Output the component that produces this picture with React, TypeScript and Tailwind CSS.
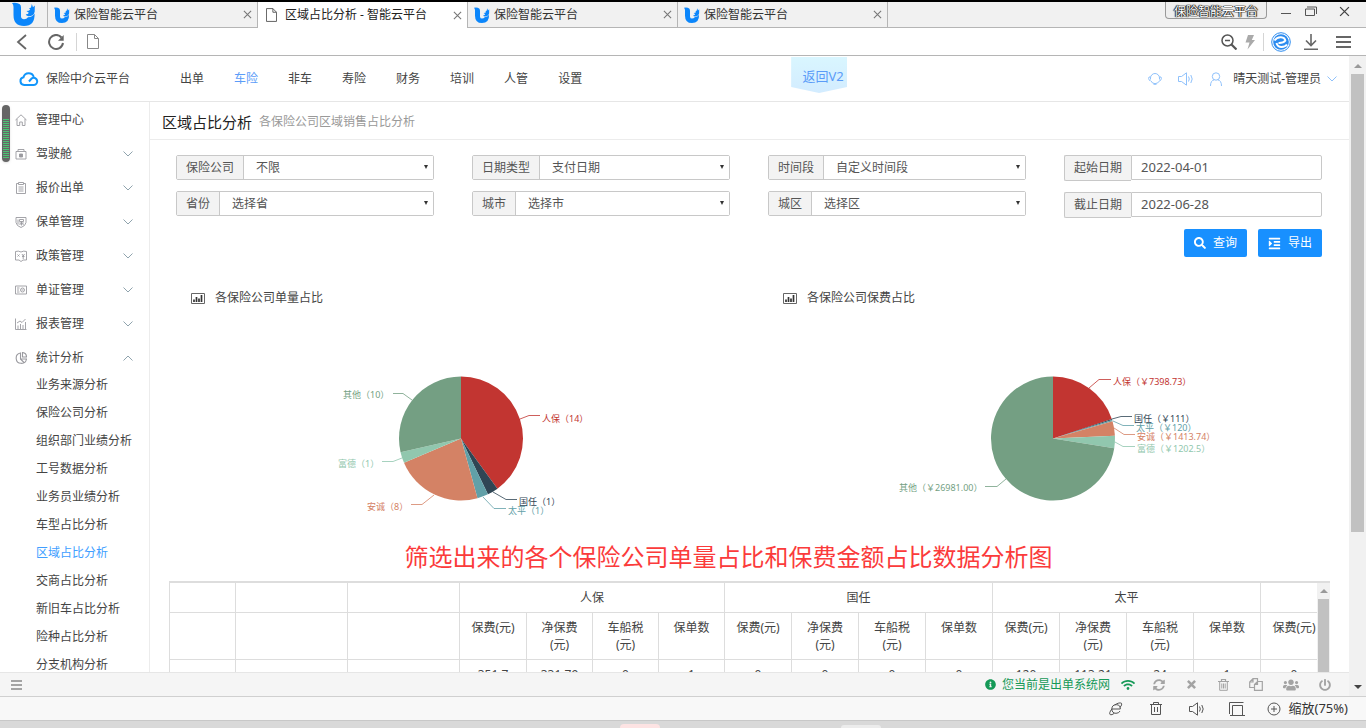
import React from "react";
import {
  FaIndent,
  FaInfoCircle,
  FaPowerOff,
  FaSearch,
  FaSyncAlt,
  FaUsers,
  FaWifi,
} from "react-icons/fa";

type IconProps = { className?: string };

// ---------- data ----------

const browserTabs = [
  { title: "保险智能云平台", active: false },
  { title: "区域占比分析 - 智能云平台", active: true },
  { title: "保险智能云平台", active: false },
  { title: "保险智能云平台", active: false },
];

const navItems = ["出单", "车险", "非车", "寿险", "财务", "培训", "人管", "设置"];

const subMenu = [
  "业务来源分析",
  "保险公司分析",
  "组织部门业绩分析",
  "工号数据分析",
  "业务员业绩分析",
  "车型占比分析",
  "区域占比分析",
  "交商占比分析",
  "新旧车占比分析",
  "险种占比分析",
  "分支机构分析",
];

const PALETTE = ["#c23531", "#2f4554", "#61a0a8", "#d48265", "#91c7ae", "#749f83"];

type Slice = { label: string; value: number; line: string; x: number; y: number };

const countSlices: Slice[] = [
  { label: "人保（14）", value: 14, line: "347,99 356,95.5 367,95.5", x: 369, y: 98 },
  { label: "国任（1）", value: 1, line: "320,172 333,179.5 344,179.5", x: 346, y: 181 },
  { label: "太平（1）", value: 1, line: "310,177 321,188.5 333,188.5", x: 335, y: 190 },
  { label: "安诚（8）", value: 8, line: "261,175 249,184.5 238,184.5", x: 194, y: 186 },
  { label: "富德（1）", value: 1, line: "229,138 220,141.5 209,141.5", x: 165, y: 143 },
  { label: "其他（10）", value: 10, line: "239,80 230,73.5 220,73.5", x: 170, y: 74 },
];

const premiumSlices: Slice[] = [
  { label: "人保（￥7398.73）", value: 7398.73, line: "324,68 334,59.5 346,59.5", x: 348, y: 61 },
  { label: "国任（￥111）", value: 111, line: "347,99 356,96.5 367,96.5", x: 369, y: 98 },
  { label: "太平（￥120）", value: 120, line: "348,101 358,105.5 369,105.5", x: 371, y: 107 },
  { label: "安诚（￥1413.74）", value: 1413.74, line: "349,108 359,114.5 370,114.5", x: 372, y: 116 },
  { label: "富德（￥1202.5）", value: 1202.5, line: "350,122 358,126.5 370,126.5", x: 372, y: 128 },
  { label: "其他（￥26981.00）", value: 26981, line: "241,159 232,166.5 220,166.5", x: 134, y: 167 },
];

const groups = [
  { name: "人保", row: ["351.7", "331.79", "0", "1"] },
  { name: "国任", row: ["0", "0", "0", "0"] },
  { name: "太平", row: ["120", "113.21", "24", "1"] },
];
const columns = ["保费(元)", "净保费(元)", "车船税(元)", "保单数"];

// ---------- icons ----------

function LogoU({ className }: IconProps) {
  return (
    <svg viewBox="0 0 24 24" className={className} fill="#0b86fb" aria-hidden="true">
      <path d="M0 1Q5 0 7.800 2.200 9 3.200 9 5.500V14.500Q9.300 17.300 12 17.300 14.600 17.200 16 15.200 20.500 15.200 22.600 11.500 23 24 12 24 1.500 24 1.500 13V5Q1.500 2.500 0 1z" />
      <path d="M14.500 9Q17 9 18.300 7.500L17 6.500 19 5.600 19.800 2 21 5.300 22.800 3.500 22.700 9.500Q22 14.200 16.500 14.300 14 14 13.800 12.300 16 12.600 16.800 10.800z" />
    </svg>
  );
}

function FileIcon({ className }: IconProps) {
  return (
    <svg viewBox="0 0 12 15" className={className} fill="none" stroke="currentColor" aria-hidden="true">
      <path d="M.5.5h7l4 4v10H.5zM7.500.5v4h4" />
    </svg>
  );
}

function CloseIcon({ className }: IconProps) {
  return (
    <svg viewBox="0 0 10 10" className={className} fill="none" stroke="currentColor" strokeWidth="1.2" aria-hidden="true">
      <path d="M1 1l8 8M9 1L1 9" />
    </svg>
  );
}

function Chevron({ className, up }: IconProps & { up?: boolean }) {
  return (
    <svg viewBox="0 0 10 6" className={className} fill="none" stroke="currentColor" aria-hidden="true">
      <path d={up ? "M.5 5.500L5 1l4.500 4.500" : "M.5.5L5 5 9.500.5"} />
    </svg>
  );
}

function CloudLogo({ className }: IconProps) {
  return (
    <svg viewBox="0 0 20 16" className={className} fill="none" stroke="#1296fb" strokeWidth="2" aria-hidden="true">
      <path d="M10 10.500l2.800-3.200a3.600 3.600 0 1 1 2 6.700H5.200a3.900 3.900 0 0 1-.7-7.700A5.400 5.400 0 0 1 14.800 6" />
    </svg>
  );
}

function BarsIcon({ className }: IconProps) {
  return (
    <svg viewBox="0 0 14 11" className={className} fill="none" aria-hidden="true">
      <path d="M.5.5h13v10H.5z" stroke="#666" />
      <path d="M3 9V6.500M5.500 9V4M8 9V5.500M10.500 9V2" stroke="#333" strokeWidth="1.700" />
    </svg>
  );
}

function SoundIcon({ className }: IconProps) {
  return (
    <svg viewBox="0 0 16 14" className={className} fill="none" stroke="currentColor" aria-hidden="true">
      <path d="M.5 4.500h3L8.500.8v12.400L3.500 9.500h-3zM10.500 4.500q1.600 2.500 0 5M12.800 3q2.800 4 0 8" />
    </svg>
  );
}

function MenuIcon({ className }: IconProps) {
  return (
    <svg viewBox="0 0 11 10" className={className} stroke="currentColor" strokeWidth="2" aria-hidden="true">
      <path d="M0 1h11M0 5h11M0 9h11" />
    </svg>
  );
}

function TimesIcon({ className }: IconProps) {
  return (
    <svg viewBox="0 0 10 10" className={className} stroke="currentColor" strokeWidth="2.800" aria-hidden="true">
      <path d="M1 1l8 8M9 1L1 9" />
    </svg>
  );
}

function TrashIcon({ className }: IconProps) {
  return (
    <svg viewBox="0 0 11 12" className={className} fill="none" stroke="currentColor" aria-hidden="true">
      <path d="M0 2.500h11M3.500 2.500v-2h4v2" strokeWidth="1.200" />
      <path d="M1.700 2.500v8.800h7.600V2.500M3.800 4.500v5M5.500 4.500v5M7.200 4.500v5" />
    </svg>
  );
}

function CopyIcon({ className }: IconProps) {
  return (
    <svg viewBox="0 0 14 13" className={className} fill="none" stroke="currentColor" strokeWidth="1.200" aria-hidden="true">
      <path d="M5 9.500H.7V4L4 .7h4.500v3M4 .7V4H.7M5.500 6.500L8.500 3.500h4.800v8.800H5.500zM8.500 3.500v3h-3" />
    </svg>
  );
}

const sideIcon = (children: React.ReactNode) => (
  <svg viewBox="0 0 12 12" className="h-3 w-3 text-[#9a9a9f]" fill="none" stroke="currentColor" strokeWidth="0.9" aria-hidden="true">
    {children}
  </svg>
);

const menu = [
  { label: "管理中心", icon: sideIcon(<path d="M.5 6L6 .8 11.500 6M2 5v6.500h2.700V8h2.600v3.500H10V5" />) },
  {
    label: "驾驶舱",
    icon: sideIcon(
      <>
        <path d="M1 3.500h10v7.500H1zM3 3V1.500h6V3" />
        <path d="M4.500 6h3v3h-3z" fill="currentColor" />
      </>
    ),
  },
  { label: "报价出单", icon: sideIcon(<path d="M3.500 1.500h-2v10h9v-10h-2M3.500.5h5v2h-5zM3.500 5h5M3.500 7h5M3.500 9h5" />) },
  { label: "保单管理", icon: sideIcon(<path d="M1 1.500h10v5Q10.500 10 6 11.500 1.500 10 1 6.500zM3 3.500v5M4.500 3.500h4v2h-4zM4.300 7h4.500M6.500 5.500v4M6.500 7L4.500 9M6.500 7l2.300 2" />) },
  { label: "政策管理", icon: sideIcon(<path d="M.5 1.500Q3.500.5 6 2q2.500-1.500 5.500-.5v8.500H8L6 11.500 4 10H.5zM2.500 4.500l2 2M2.500 6.500l2-2M7 4l1.200 2L9.500 4M7 6.500h2.500M8.200 6v3" />) },
  { label: "单证管理", icon: sideIcon(<path d="M.5 2h11v8H.5zM2 4h2.500M2 6h2M2 8h2.500M9.500 6a2 2 0 1 1-4 0 2 2 0 0 1 4 0zM6.500 6h2" />) },
  { label: "报表管理", icon: sideIcon(<path d="M.5.5v11h11M3 11V7.500M5.500 11V6M8 11V7M10.500 11V4M2 5l3-2 2 1.500L10.500 1" />) },
  { label: "统计分析", icon: sideIcon(<path d="M5.500 1a5.200 5.200 0 1 0 6 6h-6zM7.500.5V5h4Q11.500 1 7.500.5zM5.500 7l3.500 3.500" strokeWidth="1.1" />) },
];

// ---------- browser chrome ----------

function TabStrip() {
  return (
    <div className="flex h-[26px] bg-[#f1f1f1]">
      <div className="flex w-12 justify-center border-r border-b border-[#b5b5b5]">
        <LogoU className="h-6 w-6" />
      </div>
      {browserTabs.map((tab, i) => (
        <div
          key={i}
          className={
            "flex w-[210px] items-center gap-1 border-r border-[#b5b5b5] pr-[5px] pl-1.5 " +
            (tab.active ? "bg-white text-[#222]" : "border-b text-[#333]")
          }
        >
          {tab.active ? (
            <FileIcon className="mr-1 ml-0.5 h-3.5 w-[11px] text-[#555]" />
          ) : (
            <LogoU className="h-4 w-4" />
          )}
          <span className="flex-1 truncate">{tab.title}</span>
          <button type="button" aria-label="关闭标签页" className="text-[#777]">
            <CloseIcon className="h-[9px] w-[9px]" />
          </button>
        </div>
      ))}
      <div className="flex flex-1 items-start justify-end border-b border-[#b5b5b5] pr-4">
        <span className="h-[17px] rounded-b border border-t-0 border-[#999] bg-[#eee] px-2 leading-[19px] text-white [text-shadow:0_0_1px_#000,0_0_1px_#000,1px_0_1px_#222,-1px_0_1px_#222]">
          保险智能云平台
        </span>
        <button type="button" aria-label="最小化" className="mt-[11px] ml-3.5 h-px w-2.5 bg-[#555]" />
        <button type="button" aria-label="还原" className="mt-1 ml-3.5 text-[#555]">
          <svg viewBox="0 0 12 10" className="h-2.5 w-3" fill="none" stroke="currentColor">
            <path d="M.5 3h9v6.500h-9zM2 1h9.500v7" />
          </svg>
        </button>
        <button type="button" aria-label="关闭" className="mt-1 ml-[22px] text-[#444]">
          <CloseIcon className="h-[11px] w-[11px]" />
        </button>
      </div>
    </div>
  );
}

function Toolbar() {
  return (
    <div className="flex h-7 items-center border-b border-[#b5b5b5] bg-white pr-[15px] pl-4 text-[#666]">
      <button type="button" aria-label="后退">
        <svg viewBox="0 0 12 16" className="h-4 w-3" fill="none" stroke="currentColor" strokeWidth="1.800">
          <path d="M10 1L2 8l8 7" />
        </svg>
      </button>
      <button type="button" aria-label="刷新" className="ml-5">
        <svg viewBox="0 0 16 16" className="h-4 w-4" fill="none" stroke="currentColor" strokeWidth="2">
          <path d="M13.500 3.500A7 7 0 1 0 15 9" />
          <path d="M15.700 1v5.700H10z" fill="currentColor" stroke="none" />
        </svg>
      </button>
      <span className="ml-3 h-[18px] w-px bg-[#d5d5d5]" />
      <FileIcon className="ml-2.5 h-[15px] w-3 text-[#888]" />
      <button type="button" aria-label="缩小" className="ml-auto">
        <svg viewBox="0 0 16 16" className="h-4 w-4" fill="none" stroke="#555" strokeWidth="1.500">
          <circle cx="6.500" cy="6.500" r="5.500" />
          <path d="M4 6.500h5" />
          <path d="M10.500 10.500l5 5" strokeWidth="2.200" />
        </svg>
      </button>
      <svg viewBox="0 0 10 16" className="ml-2 h-4 w-2.5" fill="#aaa" aria-hidden="true">
        <path d="M3 1h6L6.800 6H10L2.500 15.500 4.500 8.500H.5z" />
      </svg>
      <span className="ml-2 h-[18px] w-px bg-[#d5d5d5]" />
      <svg viewBox="0 0 20 20" className="ml-[7px] h-5 w-5" fill="none" aria-hidden="true">
        <circle cx="10" cy="10" r="9.300" stroke="#2d8cf0" />
        <circle cx="10" cy="10" r="7.800" fill="#2d8cf0" />
        <path d="M3.500 8.500Q6 4.800 10 5.200q4 .4 4.300 3.500-2 2.500-6.800 2.300M5.500 11q1 4 5 4 4-.2 5.500-2.500" stroke="#fff" strokeWidth="2" />
      </svg>
      <button type="button" aria-label="下载" className="ml-3">
        <svg viewBox="0 0 16 16" className="h-4 w-4" fill="none" stroke="currentColor" strokeWidth="1.600">
          <path d="M8 0v11.500M3 6.500l5 5 5-5M1 15.200h14" />
        </svg>
      </button>
      <button type="button" aria-label="菜单" className="ml-[17px]">
        <svg viewBox="0 0 15 12" className="h-3 w-[15px]" stroke="currentColor" strokeWidth="2">
          <path d="M0 1h15M0 6h15M0 11h15" />
        </svg>
      </button>
    </div>
  );
}

function StatusBar() {
  return (
    <div className="flex h-6 items-center justify-end border-t border-[#d0d0d0] bg-[#f8f8f8] pr-[18px] text-[#555]">
      <svg viewBox="0 0 14 13" className="h-3.5 w-3.5" fill="none" stroke="currentColor" aria-hidden="true">
        <path d="M2.800 6.500h8.500Q11.500 2.200 7.300 2.200 3 2.200 2.800 6.500q.2 4.300 4.200 4.300 3 0 4-2.300M5.500 2.500Q10.500-.5 12.500.8 13.500 2 11 5M2.800 6.500Q-.5 11 1.300 12.200q1.500.6 4-1.400" />
      </svg>
      <svg viewBox="0 0 12 13" className="ml-[27px] h-[13px] w-3" fill="none" stroke="currentColor" aria-hidden="true">
        <path d="M0 2.500h12M3.500 2.500v-2h5v2M1.500 2.500v10h9v-10M4.500 5v5M7.500 5v5" />
      </svg>
      <SoundIcon className="ml-[27px] h-3.5 w-4" />
      <svg viewBox="0 0 16 14" className="ml-6 h-3.5 w-4" fill="none" stroke="currentColor" aria-hidden="true">
        <path d="M.5 12V.5h14M3.500 3.500h10v10h-10zM1 13.500h15" />
      </svg>
      <svg viewBox="0 0 14 14" className="ml-[22px] h-3.5 w-3.5" fill="none" stroke="currentColor" aria-hidden="true">
        <circle cx="7" cy="7" r="6" />
        <path d="M4 7h6M7 4v6" />
      </svg>
      <span className="ml-2 text-[13px] text-[#333]">缩放(75%)</span>
    </div>
  );
}

function Taskbar() {
  return (
    <div className="flex h-2 items-end border-t border-[#c8c8c8] bg-[#d9d9d9] pl-[620px]">
      <span className="h-1 w-10 rounded-t bg-[#fde3e3]" />
      <span className="ml-[181px] h-[3px] w-10 rounded-t bg-[#ececec]" />
    </div>
  );
}

// ---------- page ----------

function PageHeader() {
  return (
    <header className="flex h-[46px] shrink-0 items-center border-b border-[#e6e6e6] pt-px pr-3 pl-[19px]">
      <CloudLogo className="h-4 w-5" />
      <span className="ml-[7px]">保险中介云平台</span>
      <nav className="ml-[50px] flex gap-[30px]">
        {navItems.map((item) => (
          <a key={item} href="#" className={item === "车险" ? "text-[#5b9cf8]" : ""}>
            {item}
          </a>
        ))}
      </nav>
      <a
        href="#"
        className="ml-[209px] flex h-9 w-14 justify-center self-start bg-linear-to-b from-[#d9f6ff] to-[#d3ecff] pt-2.5 pl-2 text-[13px] leading-[18px] text-[#5b9cf8] [clip-path:polygon(0_0,100%_0,100%_83%,50%_100%,0_83%)]"
      >
        返回V2
      </a>
      <div className="ml-auto flex items-center text-[#8fc1fb]">
        <svg viewBox="0 0 14 14" className="h-3.5 w-3.5" fill="none" stroke="currentColor" aria-hidden="true">
          <path d="M2.500 7.500V6a4.500 4.500 0 0 1 9 0v1.500M2.500 5H1Q0 6.500 1.500 8.500h1M11.500 5H13q1 1.500-.5 3.500h-1M3 9q1 2.500 4 2.700Q10 11.500 11.500 9M5.500 12.300h3" />
        </svg>
        <SoundIcon className="ml-4 h-3.5 w-4" />
        <svg viewBox="0 0 12 14" className="ml-4 h-3.5 w-3" fill="none" stroke="currentColor" aria-hidden="true">
          <circle cx="6" cy="4.500" r="3.700" />
          <path d="M.5 14Q.5 8.500 4.300 7.800M11.500 14Q11.500 8.500 7.700 7.800" />
        </svg>
        <span className="ml-[11px] text-[#444]">晴天测试-管理员</span>
        <Chevron className="ml-1.5 h-1.5 w-2.5" />
      </div>
    </header>
  );
}

function Sidebar() {
  return (
    <aside className="relative w-[150px] shrink-0 overflow-hidden border-r border-[#ececec]">
      {/* floating memory gauge at the window edge */}
      <div className="absolute top-[3px] left-0.5 flex h-[57px] w-2 flex-col rounded-full bg-[#666] px-px pt-3.5 pb-1 shadow">
        <span className="flex-1 bg-[repeating-linear-gradient(#4cc474_0_1px,#666_1px_2px)]" />
      </div>
      <ul className="pt-px">
        {menu.map((item) => (
          <li key={item.label}>
            <a href="#" className="flex h-[34px] items-center pr-4 pl-[15px]">
              {item.icon}
              <span className="ml-[9px] flex-1">{item.label}</span>
              {item.label !== "管理中心" && (
                <Chevron up={item.label === "统计分析"} className="h-1.5 w-2.5 text-[#8fa3ad]" />
              )}
            </a>
          </li>
        ))}
      </ul>
      <ul className="-mt-1 pl-9">
        {subMenu.map((item) => (
          <li key={item}>
            <a href="#" className={"flex h-7 items-center " + (item === "区域占比分析" ? "text-[#409eff]" : "")}>
              {item}
            </a>
          </li>
        ))}
      </ul>
    </aside>
  );
}

function SelectField({ id, label, value }: { id: string; label: string; value: string }) {
  return (
    <div className="relative flex h-[25px] rounded-xs border border-[#c8c8c8] text-[#555]">
      <label htmlFor={id} className="flex items-center border-r border-[#c8c8c8] bg-[#f3f3f3] px-[9px]">
        {label}
      </label>
      <select id={id} className="min-w-0 flex-1 appearance-none bg-white pt-px pl-3" defaultValue={value}>
        <option>{value}</option>
      </select>
      <svg viewBox="0 0 4 4" className="pointer-events-none absolute top-[9px] right-[5px] h-1 w-1" fill="#333" aria-hidden="true">
        <path d="M0 0h4L2 4z" />
      </svg>
    </div>
  );
}

function DateField({ id, label, value }: { id: string; label: string; value: string }) {
  return (
    <div className="flex items-start text-[#555]">
      <label
        htmlFor={id}
        className="flex h-[26px] items-center rounded-l-xs border border-r-0 border-[#c8c8c8] bg-[#f3f3f3] px-[9px]"
      >
        {label}
      </label>
      <input
        id={id}
        type="text"
        defaultValue={value}
        className="h-[25px] min-w-0 flex-1 rounded-r-xs border border-[#c8c8c8] pb-0.5 pl-[9px] text-[13px]"
      />
    </div>
  );
}

function Filters() {
  return (
    <form className="pt-[15px] pr-[27px] pl-[26px]" onSubmit={(e) => e.preventDefault()}>
      <div className="grid grid-cols-4 gap-x-[38px]">
        <div className="flex flex-col gap-[11px]">
          <SelectField id="company" label="保险公司" value="不限" />
          <SelectField id="province" label="省份" value="选择省" />
        </div>
        <div className="flex flex-col gap-[11px]">
          <SelectField id="dateType" label="日期类型" value="支付日期" />
          <SelectField id="city" label="城市" value="选择市" />
        </div>
        <div className="flex flex-col gap-[11px]">
          <SelectField id="period" label="时间段" value="自定义时间段" />
          <SelectField id="district" label="城区" value="选择区" />
        </div>
        <div className="flex flex-col gap-[11px]">
          <DateField id="start" label="起始日期" value="2022-04-01" />
          <DateField id="end" label="截止日期" value="2022-06-28" />
        </div>
      </div>
      <div className="mt-[11px] flex justify-end gap-[11px] text-white">
        <button type="submit" className="flex h-7 items-center gap-[7px] rounded-xs bg-[#1890ff] px-2.5">
          <FaSearch className="h-3 w-3" />
          查询
        </button>
        <button type="button" className="flex h-7 items-center gap-[7px] rounded-xs bg-[#1890ff] px-2.5">
          <FaIndent className="h-[13px] w-[13px]" />
          导出
        </button>
      </div>
    </form>
  );
}

function slicePath(cx: number, cy: number, r: number, from: number, to: number) {
  const point = (t: number) => {
    const a = t * 2 * Math.PI;
    return `${cx + r * Math.sin(a)} ${cy - r * Math.cos(a)}`;
  };
  return `M${cx} ${cy}L${point(from)}A${r} ${r} 0 ${to - from > 0.5 ? 1 : 0} 1 ${point(to)}Z`;
}

function PieChart({ title, slices }: { title: string; slices: Slice[] }) {
  const total = slices.reduce((sum, s) => sum + s.value, 0);
  let acc = 0;
  return (
    <section>
      <h2 className="flex h-[22px] items-center pl-[34px]">
        <BarsIcon className="h-[11px] w-3.5" />
        <span className="ml-2.5">{title}</span>
      </h2>
      <div className="mt-[11px] pl-4">
        <svg viewBox="0 0 576 220" className="h-[220px] w-full" role="img" aria-label={title}>
          {slices.map((s, i) => {
            const from = acc / total;
            acc += s.value;
            return (
              <g key={s.label}>
                <path d={slicePath(288, 118.5, 62, from, acc / total)} fill={PALETTE[i]} />
                <polyline points={s.line} fill="none" stroke={PALETTE[i]} strokeWidth="0.800" />
                <text x={s.x} y={s.y} fontSize="9" dominantBaseline="central" fill={PALETTE[i]}>
                  {s.label}
                </text>
              </g>
            );
          })}
        </svg>
      </div>
    </section>
  );
}

function ReportTable() {
  const cell = "border-r border-b border-[#ddd] px-2 py-1.5 text-center align-top font-normal";
  return (
    <div className="mx-[19px] mt-[7px] flex border-t-2 border-l border-[#ddd]">
      <div className="min-w-0 flex-1 overflow-hidden">
        <table className="w-[1158px] table-fixed border-separate border-spacing-0 leading-[17px]">
          <colgroup>
            <col className="w-[66px]" />
            <col className="w-[112px]" />
            <col className="w-[112px]" />
            <col className="w-[67px]" />
            <col className="w-[66px]" span={3} />
            <col className="w-[67px]" span={9} />
          </colgroup>
          <thead>
            <tr>
              <th className={cell} />
              <th className={cell} />
              <th className={cell} />
              {groups.map((g) => (
                <th key={g.name} colSpan={4} className={cell}>
                  {g.name}
                </th>
              ))}
              <th className={cell} />
            </tr>
            <tr>
              <th className={cell} />
              <th className={cell} />
              <th className={cell} />
              {groups.map((g) =>
                columns.map((c) => (
                  <th key={g.name + c} className={cell}>
                    {c}
                  </th>
                ))
              )}
              <th className={cell}>{columns[0]}</th>
            </tr>
          </thead>
          <tbody>
            <tr>
              <td className={cell} />
              <td className={cell} />
              <td className={cell} />
              {groups.map((g) =>
                g.row.map((v, i) => (
                  <td key={g.name + i} className={cell}>
                    {v}
                  </td>
                ))
              )}
              <td className={cell}>0</td>
            </tr>
          </tbody>
        </table>
      </div>
      <div className="flex w-[13px] flex-col items-center bg-[#f1f1f1] pt-1.5">
        <svg viewBox="0 0 8 4" className="h-1 w-2" fill="#999" aria-hidden="true">
          <path d="M0 4h8L4 0z" />
        </svg>
        <span className="mt-1.5 w-[11px] flex-1 bg-[#c1c1c1]" />
      </div>
    </div>
  );
}

function PageFooter() {
  return (
    <footer className="flex h-6 shrink-0 items-center border-t border-[#e6e6e6] bg-[#f5f5f5] pr-[18px] pl-[11px] text-[#a3a3a3]">
      <button type="button" aria-label="收起菜单">
        <MenuIcon className="h-2.5 w-[11px]" />
      </button>
      <div className="ml-auto flex items-center text-[#159957]">
        <FaInfoCircle className="h-[11px] w-[11px]" />
        <span className="ml-1.5">您当前是出单系统网</span>
        <FaWifi className="ml-[11px] h-3 w-3.5" />
      </div>
      <div className="ml-[18px] flex items-center gap-5">
        <button type="button" aria-label="刷新">
          <FaSyncAlt className="h-3 w-3" />
        </button>
        <button type="button" aria-label="关闭" className="px-0.5">
          <TimesIcon className="h-[9px] w-[9px]" />
        </button>
        <button type="button" aria-label="删除">
          <TrashIcon className="h-3 w-[11px]" />
        </button>
        <button type="button" aria-label="复制">
          <CopyIcon className="h-[13px] w-3.5" />
        </button>
        <button type="button" aria-label="用户">
          <FaUsers className="h-4 w-4" />
        </button>
        <button type="button" aria-label="退出">
          <FaPowerOff className="h-3 w-3" />
        </button>
      </div>
    </footer>
  );
}

function PageScrollbar() {
  return (
    <div className="flex w-[17px] shrink-0 flex-col items-center bg-[#f1f1f1] pt-2">
      <svg viewBox="0 0 8 4" className="h-1 w-2 shrink-0" fill="#999" aria-hidden="true">
        <path d="M0 4h8L4 0z" />
      </svg>
      <div className="mt-1.5 min-h-0 w-[13px] flex-1">
        <div className="h-3/4 bg-[#c1c1c1]" />
      </div>
      <svg viewBox="0 0 8 4" className="mb-[7px] h-1 w-2 shrink-0" fill="#444" aria-hidden="true">
        <path d="M0 0h8L4 4z" />
      </svg>
    </div>
  );
}

export default function App() {
  return (
    <div className="flex h-screen flex-col overflow-hidden bg-white font-['Noto_Sans','Noto_Sans_CJK_SC',sans-serif] text-xs text-[#444]">
      <div className="h-0.5 shrink-0 bg-black" />
      <div className="shrink-0">
        <TabStrip />
        <Toolbar />
      </div>
      <div className="flex min-h-0 flex-1">
        <div className="flex min-w-0 flex-1 flex-col">
          <PageHeader />
          <div className="flex min-h-0 flex-1">
            <Sidebar />
            <main className="min-w-0 flex-1 overflow-hidden">
              <div className="flex h-[38px] items-center border-b border-[#ececec] pt-[3px] pl-3">
                <h1 className="text-[15px] text-[#222]">区域占比分析</h1>
                <span className="ml-[7px] text-[#999]">各保险公司区域销售占比分析</span>
              </div>
              <Filters />
              <div className="mt-[30px] grid grid-cols-2 pr-2 pl-[7px]">
                <PieChart title="各保险公司单量占比" slices={countSlices} />
                <PieChart title="各保险公司保费占比" slices={premiumSlices} />
              </div>
              <p className="pr-[42px] text-center text-2xl leading-[34px] text-[#fb3b3b]">
                筛选出来的各个保险公司单量占比和保费金额占比数据分析图
              </p>
              <ReportTable />
            </main>
          </div>
          <PageFooter />
        </div>
        <PageScrollbar />
      </div>
      <div className="shrink-0">
        <StatusBar />
        <Taskbar />
      </div>
    </div>
  );
}
